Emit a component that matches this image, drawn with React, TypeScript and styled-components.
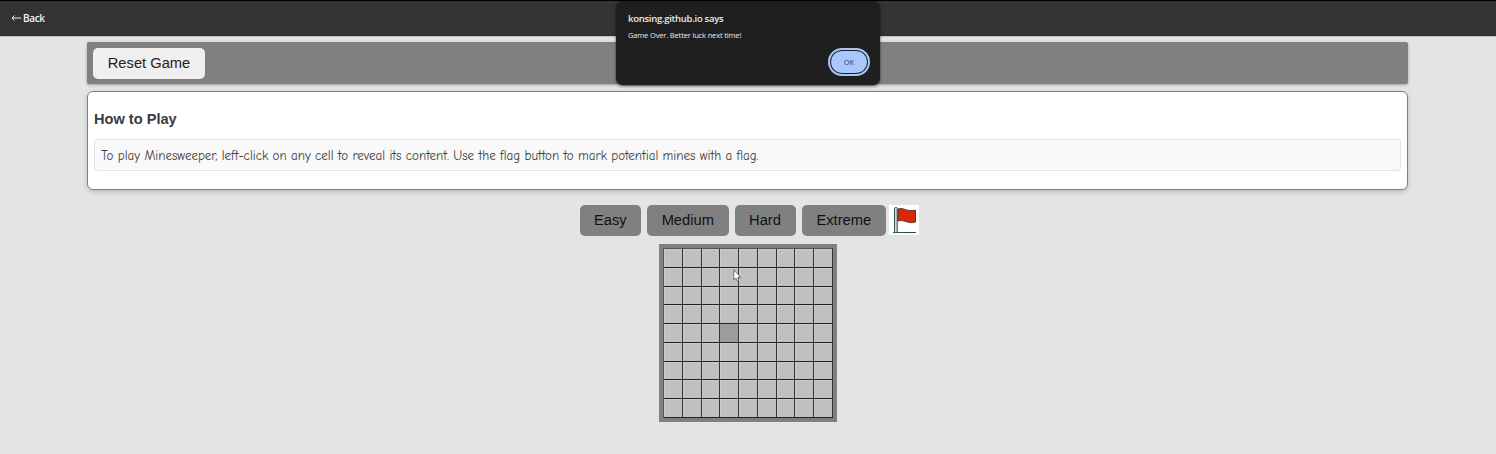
import React from "react";
import styled, { createGlobalStyle } from "styled-components";

const GlobalStyle = createGlobalStyle`
  * { box-sizing: border-box; }
  body {
    margin: 0;
    background: #e4e4e4;
    font-family: "Liberation Sans", Arial, sans-serif;
    color: #333;
    overflow: hidden;
  }
`;

const Page = styled.div`
  height: 454px;
  position: relative;
`;

const Header = styled.header`
  height: 36px;
  border-top: 1px solid #000;
  border-bottom: 1px solid #292929;
  background: #333;
  padding: 0 11px 1px;
  display: flex;
  align-items: center;
  box-shadow: 0 1px 1px rgba(0, 0, 0, 0.12);
`;

const BackLink = styled.a`
  display: flex;
  align-items: center;
  gap: 2px;
  color: #f4f4f4;
  font: 600 10px/12px "Open Sans", "Noto Sans", sans-serif;
  letter-spacing: -0.35px;
`;

const Content = styled.main`
  width: 1321px;
  margin: 6px 0 0 87px;
  display: flex;
  flex-direction: column;
`;

const Toolbar = styled.div`
  height: 42px;
  padding: 6px;
  background: #808080;
  border-radius: 2px;
  box-shadow: 0 1px 3px rgba(0, 0, 0, 0.3);
`;

const Button = styled.button<{ $width: number; $light?: boolean }>`
  width: ${(p) => p.$width}px;
  height: 31px;
  padding: 0 0 1px;
  border: 0;
  border-radius: 5px;
  background: ${(p) => (p.$light ? "#efefef" : "#808080")};
  color: ${(p) => (p.$light ? "#222" : "#111")};
  font: 14.7px "Liberation Sans", Arial, sans-serif;
`;

const Card = styled.section`
  height: 99px;
  margin-top: 7px;
  padding: 18px 6px 0;
  background: #fff;
  border: 1px solid #808080;
  border-radius: 6px;
  box-shadow: 0 2px 5px rgba(0, 0, 0, 0.18);
`;

const Title = styled.h2`
  margin: 0;
  font-size: 14.6px;
  line-height: 18px;
  color: #3a3a3e;
`;

const Instructions = styled.p`
  height: 32px;
  margin: 11px 0 0;
  padding: 0 6px;
  border: 1px solid #e4e4e4;
  border-radius: 3px;
  background: #f9f9f9;
  color: #3c3c3c;
  font: 13px/32px "Comic Neue", "Comic Sans MS", Lato, sans-serif;
  white-space: nowrap;
`;

const Levels = styled.div`
  display: flex;
  gap: 6px;
  margin: 15px 0 0 492.5px;
`;

const FlagButton = styled.button`
  width: 30px;
  height: 30px;
  margin-left: -3px;
  padding: 0;
  border: 0;
  background: #fff;
  display: block;
`;

const Board = styled.div`
  width: 178px;
  height: 178px;
  margin: 8px 0 0 572px;
  border: 4px solid #808080;
  background: #808080;
`;

const Cells = styled.div`
  width: 170px;
  height: 170px;
  border: 1px solid #555;
  border-width: 1px 0 0 1px;
  display: grid;
  grid-template: repeat(9, 1fr) / repeat(9, 1fr);
`;

const Cell = styled.div<{ $open: boolean }>`
  border-right: 1px solid #333;
  border-bottom: 1px solid #222;
  background: ${(p) => (p.$open ? "#9c9c9c" : "#c0c0c0")};
  box-shadow: ${(p) => (p.$open ? "none" : "inset 1px 1px 0 #cbcbcb")};
`;

const Dialog = styled.div`
  position: absolute;
  z-index: 2;
  top: 1px;
  left: 616px;
  width: 263.5px;
  height: 84px;
  padding: 11px 9.5px 9px 12px;
  border-radius: 7px;
  background: #1f1f1f;
  color: #ececec;
  font-family: "Open Sans", "Noto Sans", sans-serif;
  box-shadow: 0 1px 3px rgba(0, 0, 0, 0.65);
  display: flex;
  flex-direction: column;
`;

const DialogTitle = styled.strong`
  font-size: 9.5px;
  line-height: 13px;
  font-weight: 600;
  letter-spacing: -0.28px;
`;

const Message = styled.span`
  margin-top: 5px;
  font-size: 7.5px;
  line-height: 10px;
  letter-spacing: -0.15px;
`;

const OkButton = styled.button`
  width: 38px;
  height: 24px;
  margin: auto 2px 2px auto;
  padding: 0;
  border: 1px solid #1f1f1f;
  border-radius: 13px;
  outline: 2px solid #a8c7fa;
  background: #a8c7fa;
  color: #24436f;
  font: 7.5px "Open Sans", sans-serif;
`;

const Cursor = styled.svg`
  position: absolute;
  left: 733px;
  top: 269px;
`;

const levels: [string, number][] = [["Easy", 61.5], ["Medium", 81.5], ["Hard", 61], ["Extreme", 84.5]];

export default function App() {
  return (
    <Page>
      <GlobalStyle />
      <Header>
        <BackLink>
          <svg width="10" height="8" viewBox="0 0 10 8" fill="none" stroke="currentColor">
            <path d="M10 4H1M3.5 1.5 1 4l2.5 2.5" />
          </svg>
          Back
        </BackLink>
      </Header>
      <Content>
        <Toolbar><Button $light $width={112}>Reset Game</Button></Toolbar>
        <Card>
          <Title>How to Play</Title>
          <Instructions>
            To play Minesweeper, left-click on any cell to reveal its content. Use the flag button to mark potential mines with a flag.
          </Instructions>
        </Card>
        <Levels>
          {levels.map(([name, width]) => <Button key={name} $width={width}>{name}</Button>)}
          <FlagButton aria-label="Flag">
            <svg width="30" height="30" viewBox="0 0 30 30">
              <path d="M4 27.5H27" stroke="#294c43" strokeWidth="1" />
              <rect x="5.5" y="2.5" width="2.7" height="25" rx="1" fill="#d6e0dc" stroke="#294c43" />
              <path d="M9 4c5-2 8 3 17.5 1.2V17C19 19.5 15 14 9 16Z" fill="#d82808" stroke="#473029" strokeWidth=".9" />
            </svg>
          </FlagButton>
        </Levels>
        <Board>
          <Cells>
            {Array.from({ length: 81 }, (_, i) => <Cell key={i} $open={i === 39} />)}
          </Cells>
        </Board>
      </Content>
      <Dialog role="alertdialog">
        <DialogTitle>konsing.github.io says</DialogTitle>
        <Message>Game Over. Better luck next time!</Message>
        <OkButton>OK</OkButton>
      </Dialog>
      <Cursor width="9" height="13" viewBox="0 0 9 13">
        <path d="M.8.8v10.2l2.2-2 1.4 3.2 1.6-.8-1.3-3h3Z" fill="#fff" stroke="#444" strokeWidth=".7" />
      </Cursor>
    </Page>
  );
}
